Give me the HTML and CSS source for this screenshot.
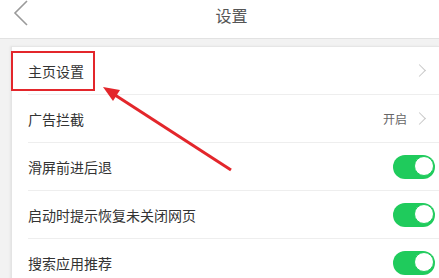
FILE: index.html
```html
<!DOCTYPE html>
<html>
	<head>
		<meta charset="utf-8">
		<title>设置</title>
		<link rel="stylesheet" href="styles.css">
	</head>
	<body>
		<div class="page">
			<div class="topbar">
				<a class="back" href="#">
					<svg width="16" height="26" viewBox="0 0 16 26"><path d="M14 1 L2 13 L14 25" fill="none" stroke="#9a9a9a" stroke-width="1.6"/></svg>
				</a>
				<div class="title">设置</div>
			</div>
			<div class="card">
				<div class="row">
					<div class="row-in">
						<span class="label">主页设置</span>
						<span class="more"></span>
					</div>
				</div>
				<div class="row">
					<div class="row-in">
						<span class="label">广告拦截</span>
						<span class="value">开启</span>
						<span class="more"></span>
					</div>
				</div>
				<div class="row">
					<div class="row-in">
						<span class="label">滑屏前进后退</span>
						<span class="switch on"></span>
					</div>
				</div>
				<div class="row">
					<div class="row-in">
						<span class="label">启动时提示恢复未关闭网页</span>
						<span class="switch on"></span>
					</div>
				</div>
				<div class="row">
					<div class="row-in">
						<span class="label">搜索应用推荐</span>
						<span class="switch on"></span>
					</div>
				</div>
			</div>

			<!-- 标注 -->
			<div class="mark-box"></div>
			<svg class="mark-arrow" width="439" height="278" viewBox="0 0 439 278">
				<line x1="231" y1="170" x2="115" y2="95" stroke="#e3262b" stroke-width="3"/>
				<polygon points="103,87 120,90 113,101" fill="#e3262b"/>
			</svg>
		</div>
	</body>
</html>
```

FILE: styles.css
```css
*{
	margin: 0;
	padding: 0;
}
a{
	text-decoration: none;
}
body{
	font-family: "Noto Sans CJK SC", "Noto Sans", sans-serif;
	background-color: #f2f2f2;
	overflow: hidden;
}
.page{
	position: relative;
	width: 439px;
	height: 278px;
	overflow: hidden;
}
.topbar{
	position: relative;
	display: flex;
	align-items: center;
	justify-content: center;
	height: 38px;
	background-color: #fff;
	border-bottom: 1px solid #e2e2e2;
}
.back{
	position: absolute;
	left: 13px;
	top: 0;
	display: block;
	height: 26px;
}
.back svg{
	display: block;
}
.title{
	font-size: 16px;
	color: #555;
	margin-left: 24px;
	margin-top: -8px;
}
.card{
	margin-top: 7px;
	margin-left: 11px;
	background-color: #fff;
	border-top: 1px solid #e6e6e6;
	border-left: 1px solid #e4e4e4;
	box-shadow: -1px 0 2px rgba(0,0,0,.06);
}
.row{
	height: 48px;
	padding-left: 16px;
}
.row-in{
	display: flex;
	align-items: center;
	height: 47px;
	padding-right: 4px;
	border-bottom: 1px solid #eeeeee;
}
.label{
	flex: 1;
	font-size: 14px;
	color: #333;
}
.value{
	font-size: 12px;
	color: #666;
	margin-right: 8px;
}
.more{
	width: 8px;
	height: 8px;
	border-top: 1px solid #c8c8c8;
	border-right: 1px solid #c8c8c8;
	transform: rotate(45deg);
	margin-right: 11px;
}
.switch{
	position: relative;
	display: block;
	width: 42px;
	height: 24px;
	border-radius: 12px;
	background-color: #1fcb5c;
}
.switch::after{
	content: "";
	position: absolute;
	right: 1px;
	top: 1px;
	width: 20px;
	height: 20px;
	border-radius: 50%;
	background-color: #fff;
	border: 1px solid #1fcb5c;
	box-sizing: border-box;
	box-shadow: 0 0 0 0 #1fcb5c;
}
.mark-box{
	position: absolute;
	left: 11px;
	top: 51px;
	width: 80px;
	height: 36px;
	border: 2px solid #e3262b;
}
.mark-arrow{
	position: absolute;
	left: 0;
	top: 0;
}
```
